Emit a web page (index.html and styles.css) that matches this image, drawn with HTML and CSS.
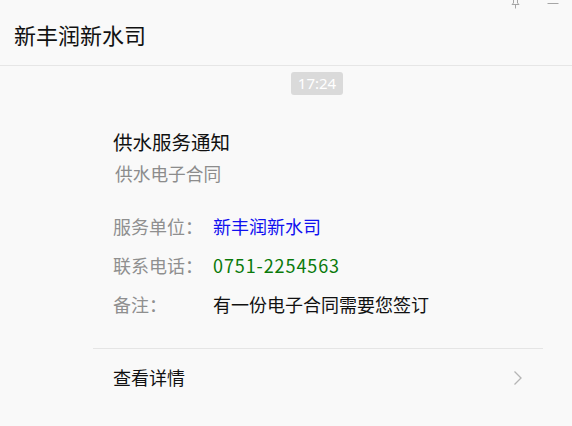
FILE: index.html
```html
<!DOCTYPE html>
<html lang="zh-CN">
<head>
<meta charset="utf-8">
<title>新丰润新水司</title>
<link rel="stylesheet" href="styles.css">
</head>
<body>
<div class="window">
  <header class="header">
    <h1 class="header-title">新丰润新水司</h1>
    <div class="win-controls">
      <svg class="pin" width="9" height="10" viewBox="0 0 9 10" aria-hidden="true">
        <path d="M2.5 0.5 V4 L1 5.5 H8 L6.5 4 V0.5 M4.5 5.5 V9.5" fill="none" stroke="#a6a6a6" stroke-width="1"/>
      </svg>
      <svg class="minus" width="12" height="10" viewBox="0 0 12 10" aria-hidden="true">
        <path d="M0.5 4.5 H11.5" stroke="#a6a6a6" stroke-width="1"/>
      </svg>
    </div>
  </header>

  <div class="time-row"><span class="time">17:24</span></div>

  <section class="card">
    <div class="card-body">
      <div class="card-title">供水服务通知</div>
      <div class="card-sub">供水电子合同</div>
      <div class="rows">
        <div class="row"><span class="label">服务单位：</span><span class="value blue">新丰润新水司</span></div>
        <div class="row"><span class="label">联系电话：</span><span class="value green phone">0751-2254563</span></div>
        <div class="row"><span class="label">备注：</span><span class="value">有一份电子合同需要您签订</span></div>
      </div>
    </div>
    <div class="card-footer">
      <span class="footer-text">查看详情</span>
      <svg class="chev" width="10" height="16" viewBox="0 0 10 16" aria-hidden="true">
        <path d="M1.5 1.5 L8 8 L1.5 14.5" fill="none" stroke="#b5b5b5" stroke-width="1.3"/>
      </svg>
    </div>
  </section>
</div>
</body>
</html>
```

FILE: styles.css
```css
html, body {
  margin: 0;
  padding: 0;
}
body {
  background: #f9f9f9;
  font-family: "Noto Sans CJK SC", "Microsoft YaHei", "Noto Sans", sans-serif;
  color: #111;
  width: 572px;
  height: 426px;
  overflow: hidden;
}
.header {
  height: 65px;
  border-bottom: 1px solid #e6e6e6;
  display: flex;
  align-items: center;
  padding-left: 14px;
  position: relative;
}
.header-title {
  margin: 0;
  font-size: 22px;
  font-weight: normal;
  line-height: 30px;
  color: #111;
  margin-top: 2px;
}
.win-controls {
  position: absolute;
  top: -1px;
  right: 13px;
  display: flex;
  gap: 27px;
  align-items: flex-start;
}
.pin, .minus {
  display: block;
}
.time-row {
  display: flex;
  justify-content: center;
  padding-top: 6px;
}
.time {
  display: inline-block;
  background: #dadada;
  color: #fff;
  font-size: 15px;
  line-height: 23px;
  height: 23px;
  width: 52px;
  text-align: center;
  border-radius: 3px;
  font-family: "Noto Sans", "Noto Sans CJK SC", sans-serif;
  margin-left: 62px;
}
.card {
  margin-left: 93px;
  width: 450px;
}
.card-body {
  padding: 33px 0 24px 20px;
  border-bottom: 1px solid #e5e5e5;
}
.card-title {
  font-size: 19.5px;
  line-height: 28px;
  color: #111;
}
.card-sub {
  font-size: 17.7px;
  line-height: 28px;
  margin-top: 3px;
  padding-left: 2px;
  color: #8c8c8c;
}
.rows {
  margin-top: 20px;
}
.row {
  display: flex;
  font-size: 18px;
  line-height: 39px;
}
.label {
  width: 100px;
  flex: none;
  color: #8f8f8f;
}
.value {
  color: #111;
}
.blue {
  color: #1010f0;
}
.green {
  color: #0a7a0a;
}
.phone {
  letter-spacing: 0.9px;
}
.card-footer {
  height: 56px;
  padding: 0 20px 4px 20px;
  display: flex;
  align-items: center;
  justify-content: space-between;
}
.footer-text {
  font-size: 18px;
  color: #111;
}
.chev {
  display: block;
  margin-top: 2px;
}
```
